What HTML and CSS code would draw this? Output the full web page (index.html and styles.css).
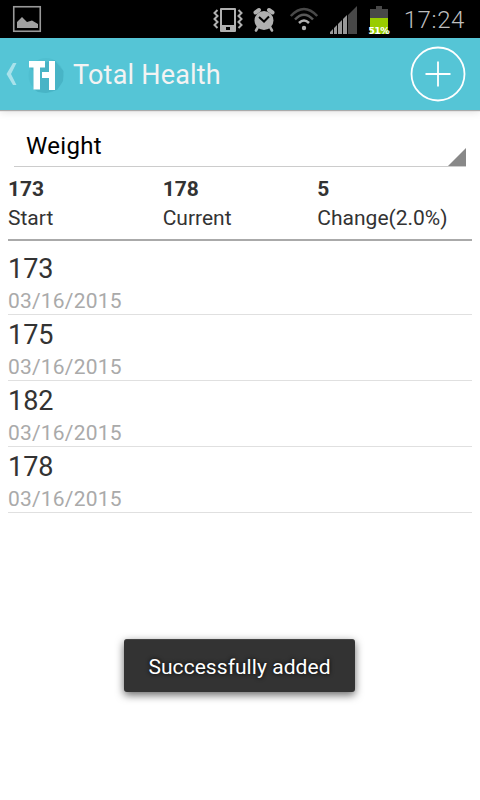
FILE: index.html
```
<!DOCTYPE html>
<html lang="en">
<head>
<meta charset="utf-8">
<title>Total Health</title>
<link rel="stylesheet" href="styles.css">
</head>
<body>
<div class="screen">
  <div class="status">
    <svg class="picture" width="30" height="28" viewBox="0 0 30 28"><rect x="1.75" y="1.75" width="26.5" height="24.5" fill="none" stroke="#999" stroke-width="1.6"/><path d="M5 23V17L10 12 15 17 20 15.5 26 19V23Z" fill="#a0a0a0"/></svg>
    <div class="status-icons">
      <svg width="30" height="26" viewBox="0 0 30 26" fill="none"><path fill="#b0b0b0" fill-rule="evenodd" d="M8 1H22Q23 1 23 2V24Q23 25 22 25H8Q7 25 7 24V2Q7 1 8 1ZM9 3V18H21V3ZM13 20V23H17V20Z"/><path d="M4.5 3 1.5 6 4.5 9 1.5 12 4.5 15 1.5 18 4.5 21M25.5 3 28.5 6 25.5 9 28.5 12 25.5 15 28.5 18 25.5 21" stroke="#b0b0b0" stroke-width="2"/></svg>
      <svg width="24" height="26" viewBox="0 0 24 26"><g stroke="#b0b0b0" stroke-linecap="round"><path d="M3.5 5.5 7 3M20.5 5.5 17 3" stroke-width="4"/><path d="M6 20 4 23.5M18 20 20 23.5" stroke-width="2.6"/></g><circle cx="12" cy="13.5" r="9.5" fill="#b0b0b0"/><path d="M7 10 12 14.5 17 9.5" fill="none" stroke="#000" stroke-width="2"/></svg>
      <svg width="30" height="26" viewBox="0 0 30 26" fill="none"><g stroke-width="2.5"><path d="M1.8 9Q15-5 28.2 9" stroke="#484848"/><path d="M6 12.5Q15 3 24 12.5" stroke="#585858"/><path d="M10 16Q15 11 20 16" stroke="#b0b0b0"/></g><circle cx="15" cy="21" r="2.2" fill="#b0b0b0"/></svg>
      <svg width="30" height="28" viewBox="0 0 30 28"><path fill="#999" d="M1 28V26L4 23V28ZM5 28V22L8 19V28ZM9 28V18L13 14V28ZM14 28V13L18 9V28Z"/><path fill="#484848" d="M19 28V9L28 0V28Z"/></svg>
      <div class="battery"><span>51%</span></div>
      <span class="clock">17:24</span>
    </div>
  </div>
  <header class="appbar">
    <svg class="back" width="11" height="22" viewBox="0 0 11 22"><path d="M7 0H10.5L5 11 10.5 22H7L.5 11Z" fill="#a9e2eb"/></svg>
    <svg class="logo" width="38" height="42" viewBox="0 0 38 42"><circle cx="18" cy="22.5" r="17.5" fill="#50bfd0"/><path d="M1 14 5.5 18V36L10 39 18 40 29 37 35 28 35.5 18 27 8V7Z" fill="#48b4c6"/><path fill="#fff" d="M1 8H17V14.5H12V36.5H5.5V14.5H1ZM21 8H27V37H21V25H14V19H21Z"/></svg>
    <h1>Total Health</h1>
    <svg class="add" width="56" height="56" viewBox="0 0 56 56" fill="none" stroke="#fff" stroke-width="1.8"><circle cx="28" cy="28" r="26.5"/><path d="M28 15.5V40.5M15.5 28H40.5"/></svg>
  </header>
  <main>
    <div class="spinner"><span>Weight</span><svg width="18" height="18" viewBox="0 0 18 18"><path d="M18 0V18H0Z" fill="#888"/></svg></div>
    <section class="summary">
      <div><strong>173</strong><span>Start</span></div>
      <div><strong>178</strong><span>Current</span></div>
      <div><strong>5</strong><span>Change(2.0%)</span></div>
    </section>
    <ul>
      <li><b>173</b><time>03/16/2015</time></li>
      <li><b>175</b><time>03/16/2015</time></li>
      <li><b>182</b><time>03/16/2015</time></li>
      <li><b>178</b><time>03/16/2015</time></li>
    </ul>
  </main>
  <div class="toast">Successfully added</div>
</div>
</body>
</html>
```
FILE: styles.css
```
* { box-sizing: border-box; }
body { margin: 0; background: #fff; font-family: Roboto, "Liberation Sans", sans-serif; color: #333; }
.screen { position: relative; width: 480px; height: 800px; overflow: hidden; background: #fff; }
svg { display: block; flex: none; }
.status { height: 38px; background: #000; display: flex; justify-content: space-between; padding: 5px 15px 0 12px; }
.status-icons { display: flex; gap: 9px; align-items: flex-start; padding-top: 2px; }
.status-icons svg:nth-child(4) { margin: -1px 0 0 1px; }
.status-icons svg:nth-child(3) { margin-left: 4px; }
.battery { position: relative; width: 20px; height: 28px; background: linear-gradient(#484848 0 9px, #99cc00 9px) 1px 3px / 18px 25px no-repeat, linear-gradient(#484848, #484848) 7px 0 / 6px 3px no-repeat; margin: -1px 0 0 1px; }
.battery span { position: absolute; left: -2px; width: 24px; top: 19px; text-align: center; font-family: "DejaVu Sans", sans-serif; font-size: 9.5px; line-height: 12px; font-weight: 700; color: #fff; letter-spacing: -.6px; }
.clock { font-size: 24px; line-height: 28px; color: #bebebe; font-weight: 300; margin: -1px 0 0 6px; letter-spacing: .6px; }
.appbar { height: 72px; background: #55c5d6; display: flex; align-items: center; padding: 0 14px 0 6px; box-shadow: 0 1px 1px #aaa, 0 2px 8px rgba(0,0,0,.12); }
.logo { margin-left: 11px; }
h1 { margin: 1px auto 0 7px; font-size: 27px; line-height: 36px; font-weight: 400; color: #f3f3f3; letter-spacing: .2px; }
main { padding: 0 8px; }
.spinner { height: 57px; margin: 0 6px; border-bottom: 1px solid #ccc; display: flex; justify-content: space-between; align-items: flex-end; color: #000; font-size: 24px; line-height: 32px; letter-spacing: .3px; }
.spinner span { margin: 0 0 4px 12px; }
.summary { height: 74px; border-bottom: 2px solid #aaa; display: grid; grid-template-columns: repeat(3, 1fr); padding-top: 8px; font-size: 21px; line-height: 29px; }
.summary strong, .summary span { display: block; }
.summary strong { font-weight: 700; }
ul { list-style: none; margin: 8px 0 0; padding: 0; }
li { height: 66px; border-bottom: 1px solid #e0e0e0; padding-top: 3px; }
li b { display: block; font-size: 27px; line-height: 34px; font-weight: 400; }
time { display: block; font-size: 21px; line-height: 30px; color: #aaa; letter-spacing: .2px; }
.toast { position: absolute; left: 124px; top: 639px; width: 231px; height: 53px; border-radius: 3px; background: #333; border-top: 1px solid #444; box-shadow: 0 3px 9px rgba(0,0,0,.6); color: #fff; text-align: center; font-size: 21px; line-height: 54px; text-shadow: 0 0 4px #000; letter-spacing: .05px; }
```
